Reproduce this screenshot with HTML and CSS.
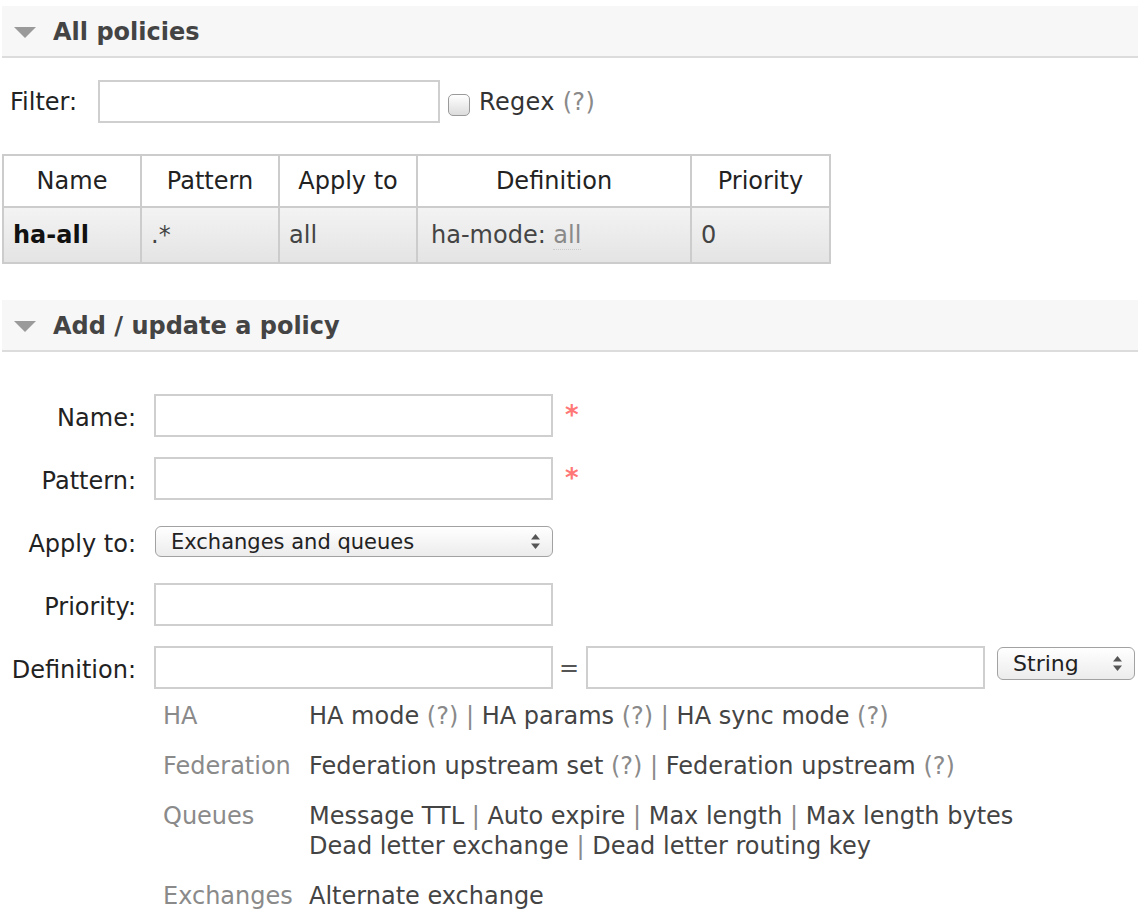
FILE: index.html
```html
<!DOCTYPE html>
<html>
<head>
<meta charset="utf-8">
<link rel="stylesheet" href="styles.css">
</head>
<body>
<div class="page">
  <section class="panel">
    <h2 class="panel-head"><svg class="tri" width="22" height="11" viewBox="0 0 22 11"><polygon points="0,0 22,0 11,11" fill="#9a9a9a"/></svg>All policies</h2>
    <div class="filter-row">
      <label class="filter-label">Filter:</label>
      <input class="text filter-input" type="text">
      <span class="checkbox"></span>
      <span class="regex">Regex <span class="help">(?)</span></span>
    </div>
    <table class="list">
      <colgroup><col class="c1"><col class="c2"><col class="c3"><col class="c4"><col class="c5"></colgroup>
      <thead>
        <tr><th>Name</th><th>Pattern</th><th>Apply to</th><th>Definition</th><th>Priority</th></tr>
      </thead>
      <tbody>
        <tr><td class="strong">ha-all</td><td>.*</td><td class="muted">all</td><td class="def">ha-mode: <abbr class="muted">all</abbr></td><td>0</td></tr>
      </tbody>
    </table>
  </section>

  <section class="panel panel-add">
    <h2 class="panel-head"><svg class="tri" width="22" height="11" viewBox="0 0 22 11"><polygon points="0,0 22,0 11,11" fill="#9a9a9a"/></svg>Add / update a policy</h2>
    <div class="form">
      <label class="flabel">Name:</label>
      <div class="fcell"><input class="text wide" type="text"><span class="req">*</span></div>

      <label class="flabel">Pattern:</label>
      <div class="fcell"><input class="text wide" type="text"><span class="req">*</span></div>

      <label class="flabel">Apply to:</label>
      <div class="fcell"><div class="select sel-apply"><span>Exchanges and queues</span><svg width="9" height="15" viewBox="0 0 9 15"><polygon points="4.5,0 9,5.5 0,5.5" fill="#555"/><polygon points="0,9.5 9,9.5 4.5,15" fill="#555"/></svg></div></div>

      <label class="flabel">Priority:</label>
      <div class="fcell"><input class="text wide" type="text"></div>

      <label class="flabel">Definition:</label>
      <div class="fcell"><input class="text wide" type="text"><span class="eq">=</span><input class="text wide" type="text"><div class="select sel-type"><span>String</span><svg width="9" height="15" viewBox="0 0 9 15"><polygon points="4.5,0 9,5.5 0,5.5" fill="#555"/><polygon points="0,9.5 9,9.5 4.5,15" fill="#555"/></svg></div></div>

      <div class="fcell helps">
        <div class="hgroup">
          <span class="hcat">HA</span>
          <div class="hvals"><div>HA mode <span class="help">(?)</span> <span class="sep">|</span> HA params <span class="help">(?)</span> <span class="sep">|</span> HA sync mode <span class="help">(?)</span></div></div>
        </div>
        <div class="hgroup">
          <span class="hcat">Federation</span>
          <div class="hvals"><div>Federation upstream set <span class="help">(?)</span> <span class="sep">|</span> Federation upstream <span class="help">(?)</span></div></div>
        </div>
        <div class="hgroup">
          <span class="hcat">Queues</span>
          <div class="hvals"><div>Message TTL <span class="sep">|</span> Auto expire <span class="sep">|</span> Max length <span class="sep">|</span> Max length bytes</div><div>Dead letter exchange <span class="sep">|</span> Dead letter routing key</div></div>
        </div>
        <div class="hgroup">
          <span class="hcat">Exchanges</span>
          <div class="hvals"><div>Alternate exchange</div></div>
        </div>
      </div>
    </div>
  </section>
</div>
</body>
</html>
```

FILE: styles.css
```css
html, body {
  margin: 0;
  padding: 0;
  background: #fff;
}
body {
  font-family: "DejaVu Sans", Verdana, sans-serif;
  font-size: 24px;
  color: #484848;
  width: 1138px;
  overflow: hidden;
}
.page {
  padding: 6px 0 0 2px;
}
.panel-head {
  margin: 0;
  box-sizing: border-box;
  height: 52px;
  background: #f7f7f7;
  border-bottom: 2px solid #dcdcdc;
  display: flex;
  align-items: center;
  padding-left: 12px;
  padding-top: 2px;
  font-size: 24px;
  font-weight: bold;
  color: #444;
  line-height: 1;
}
.tri {
  margin-right: 17px;
}
.filter-row {
  display: flex;
  align-items: center;
  margin-top: 22px;
  padding-left: 8px;
  height: 43px;
}
.filter-label {
  color: #222;
  margin-right: 21px;
}
.text {
  box-sizing: border-box;
  height: 43px;
  border: 2px solid #cfcfcf;
  background: #fff;
  margin: 0;
  padding: 0 6px;
  font: inherit;
  outline: none;
}
.filter-input {
  width: 342px;
}
.checkbox {
  box-sizing: border-box;
  width: 22px;
  height: 22px;
  margin-left: 8px;
  margin-top: 6px;
  border: 1px solid #9a9a9a;
  border-radius: 5px;
  background: linear-gradient(#ffffff, #dcdcdc);
}
.regex {
  margin-left: 9px;
  color: #333;
  letter-spacing: 0.3px;
}
.help {
  color: #8a8a8a;
}
table.list {
  margin-top: 31px;
  border-collapse: collapse;
  table-layout: fixed;
  width: 827px;
}
.c1, .c2, .c3 { width: 138px; }
.c4 { width: 274px; }
.c5 { width: 139px; }
table.list th, table.list td {
  border: 2px solid #cccccc;
  padding: 0 9px;
  white-space: nowrap;
}
table.list th {
  height: 50px;
  font-weight: normal;
  color: #222;
  text-align: center;
  background: #fff;
}
table.list td {
  height: 54px;
  text-align: left;
  color: #444;
  background: linear-gradient(#f3f3f3, #e4e4e4);
}
table.list td.def {
  padding-left: 13px;
}
table.list td.strong {
  font-weight: bold;
  color: #111;
}
.muted {
  color: #8a8a8a;
}
abbr.muted {
  text-decoration: none;
  border-bottom: 1px dotted #ccc;
}
.panel-add {
  margin-top: 36px;
}
.form {
  display: grid;
  grid-template-columns: 134px auto;
  column-gap: 18px;
  row-gap: 20px;
  margin-top: 42px;
  align-items: center;
}
.flabel {
  text-align: right;
  color: #222;
  white-space: nowrap;
  padding-top: 4px;
}
.fcell {
  display: flex;
  align-items: center;
  height: 43px;
}
.wide {
  width: 399px;
}
.req {
  color: #f77;
  margin-left: 12px;
  align-self: flex-start;
  margin-top: 8px;
  font-size: 26px;
  font-weight: bold;
  line-height: 1;
}
.eq {
  margin: 0 7px 0 6px;
  color: #555;
}
.select {
  box-sizing: border-box;
  display: flex;
  align-items: center;
  justify-content: space-between;
  border: 1px solid #a2a2a2;
  border-radius: 6px;
  background: linear-gradient(#ffffff, #ececec);
  font-size: 21px;
  color: #222;
  padding: 0 12px 0 15px;
}
.sel-apply {
  width: 398px;
  height: 31px;
  margin-left: 1px;
}
.sel-type {
  width: 138px;
  height: 33px;
  margin-left: 12px;
  margin-top: -8px;
  font-size: 22px;
}
.helps {
  grid-column: 2;
  display: block;
  height: auto;
  margin-top: -8px;
  padding-left: 9px;
  line-height: 30px;
}
.hgroup {
  display: flex;
  margin-bottom: 20px;
}
.hcat {
  width: 146px;
  flex: none;
  color: #8a8a8a;
}
.hvals {
  color: #444;
  white-space: nowrap;
}
.sep {
  color: #8a8a8a;
}
```
